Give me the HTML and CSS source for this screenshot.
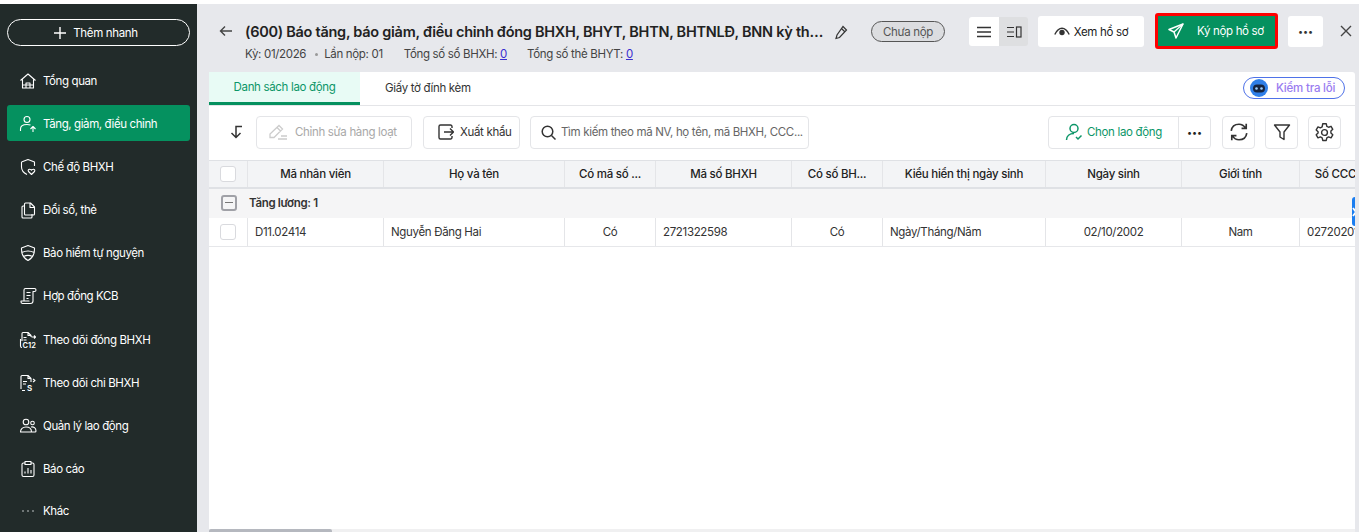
FILE: index.html
```html
<!DOCTYPE html>
<html lang="vi">
<head>
<meta charset="utf-8">
<title>Báo tăng, báo giảm</title>
<link rel="stylesheet" href="styles.css">
</head>
<body>
<div class="app">
  <aside class="sidebar">
    <button class="quick"><svg width="14" height="14" viewBox="0 0 14 14"><path d="M7 1v12M1 7h12" stroke="#fff" stroke-width="1.4" fill="none"/></svg>Thêm nhanh</button>
    <nav class="menu">
      <a class="item"><svg class="ic" viewBox="0 0 18 18"><path d="M1.5 8.5 9 2l7.5 6.5M3.5 7.5V16h11V7.5M7 16v-5h4v5M3.5 13h11"/></svg>Tổng quan</a>
      <a class="item active"><svg class="ic" viewBox="0 0 18 18"><circle cx="8" cy="4.500" r="3"/><path d="M1.500 16v-2c0-3 2.500-4.500 6.500-4.500 1.500 0 2.500.2 3.500.6M14 17v-5.500M11.500 14 14 11.500l2.500 2.500"/></svg>Tăng, giảm, điều chỉnh</a>
      <a class="item"><svg class="ic" viewBox="0 0 18 18"><path d="M9 1.500 15.500 4v4M2.500 4 9 1.500M2.500 4v5c0 3.500 2.500 6 5.500 7.500"/><path d="M12.500 16.500 9.500 13.500c-.8-1 0-2.500 1.500-2.300.7 0 1.200.5 1.500 1 .3-.5.8-1 1.500-1 1.500-.2 2.300 1.300 1.500 2.300z"/></svg>Chế độ BHXH</a>
      <a class="item"><svg class="ic" viewBox="0 0 18 18"><path d="M6.500 2h5l4 4v7a1 1 0 0 1-1 1h-8a1 1 0 0 1-1-1V3a1 1 0 0 1 1-1zM11 2v4.500h4.500M5.500 5H4a1 1 0 0 0-1 1v10a1 1 0 0 0 1 1h8a1 1 0 0 0 1-1v-3"/></svg>Đổi sổ, thẻ</a>
      <a class="item"><svg class="ic" viewBox="0 0 18 18"><path d="M9 1.500 15.500 4c.3 6-1.500 10-6.500 12.500C4 14 2.200 10 2.500 4zM2.800 8.500C7 6.500 11 6.500 15.200 8.500M4.500 12.500c3-1.500 6-1.500 9 0"/></svg>Bảo hiểm tự nguyện</a>
      <a class="item"><svg class="ic" viewBox="0 0 18 18"><path d="M5 14V3a1.500 1.500 0 0 1 1.500-1.500h9a1.500 1.500 0 0 1 0 3H14V14a2.500 2.500 0 0 1-2.500 2.500h-8A1.800 1.800 0 0 1 2 14.500V14h8v.5M7.500 5.500h4M7.500 8.500h4M7.500 11.500h2"/></svg>Hợp đồng KCB</a>
      <a class="item step"><svg class="ic" viewBox="0 0 18 18"><path d="M3 10V2.500A1 1 0 0 1 4 1.500h5l3 3v1.500M9 1.500v3h3M4.500 6.500h3M4.500 9h3M1.500 8v7c0 1 .5 1.500 1.500 1.500M12.500 6h4M15 4.500 16.500 6 15 7.500"/><text x="3.500" y="17" class="ictext">C12</text></svg>Theo dõi đóng BHXH</a>
      <a class="item"><svg class="ic" viewBox="0 0 18 18"><path d="M3 16.500h3M2 15V2.500a1 1 0 0 1 1-1h6l3 3V8M9 1.500v3h3M4 7.500h4M4 10h3M14 5l2 1.500L14 8"/><text x="8" y="17" class="ictext big">S</text></svg>Theo dõi chi BHXH</a>
      <a class="item"><svg class="ic" viewBox="0 0 18 18"><circle cx="7" cy="5" r="2.800"/><circle cx="13.500" cy="6" r="1.800"/><path d="M1.500 15c0-3 2.200-5 5.500-5s5.500 2 5.500 5zM12 10c2.800-.5 5 1 5 4 0 .5-.4 1-1 1h-3.500"/></svg>Quản lý lao động</a>
      <a class="item"><svg class="ic" viewBox="0 0 18 18"><path d="M6 3H4.500A1.500 1.500 0 0 0 3 4.500V15a1.500 1.500 0 0 0 1.500 1.500h9A1.500 1.500 0 0 0 15 15V4.500A1.500 1.500 0 0 0 13.500 3H12M6 1.500h6V4.500H6zM6 13.500v-2M9 13.500V8M12 13.500v-3.500"/></svg>Báo cáo</a>
      <a class="item more-item"><svg class="ic dots" viewBox="0 0 18 18"><circle cx="4" cy="9" r="1"/><circle cx="9" cy="9" r="1"/><circle cx="14" cy="9" r="1"/></svg>Khác</a>
    </nav>
  </aside>

  <main class="main">
    <header class="topbar">
      <svg class="back" width="14" height="12" viewBox="0 0 14 12"><path d="M13 6H1.500M6 1.500 1.500 6 6 10.500" stroke="#444" stroke-width="1.400" fill="none"/></svg>
      <div class="titles">
        <div class="title-row">
          <h1 class="title">(600) Báo tăng, báo giảm, điều chỉnh đóng BHXH, BHYT, BHTN, BHTNLĐ, BNN kỳ thu tiền</h1>
          <svg class="pencil" width="16" height="16" viewBox="0 0 16 16"><path d="M10 2.500 13.500 6l-7 7.500-3.500 1 1-3.500zM8.500 4.500l3.500 3.500" stroke="#333" stroke-width="1.200" fill="none"/></svg>
        </div>
        <div class="meta">
          <span class="ky">Kỳ: 01/2026</span><span class="dot"></span><span class="lan">Lần nộp: 01</span>
          <span class="tot1">Tổng số sổ BHXH: <a class="lnk">0</a></span>
          <span>Tổng số thẻ BHYT: <a class="lnk">0</a></span>
        </div>
      </div>
      <span class="status">Chưa nộp</span>
      <div class="toggle">
        <span class="tg on"><svg width="16" height="12" viewBox="0 0 16 12"><path d="M1 1.500h14M1 6h14M1 10.500h14" stroke="#333" stroke-width="1.300"/></svg></span>
        <span class="tg"><svg width="16" height="12" viewBox="0 0 16 12"><path d="M1 1.500h7M1 6h7M1 10.500h7" stroke="#333" stroke-width="1.200"/><rect x="10.500" y="1" width="4.500" height="10" fill="none" stroke="#333" stroke-width="1.200"/></svg></span>
      </div>
      <button class="view"><svg width="16" height="10" viewBox="0 0 16 10"><path d="M.8 7.500C3 3 5.500 1.300 8 1.300S13 3 15.200 7.500" fill="none" stroke="#333" stroke-width="1.400"/><circle cx="8" cy="5.500" r="2.700" fill="#333"/></svg>Xem hồ sơ</button>
      <button class="sign"><svg width="16" height="16" viewBox="0 0 16 16"><path d="M15 1 1 6.500l5 2.500 2 6z" fill="none" stroke="#fff" stroke-width="1.500" stroke-linejoin="round"/><path d="M15 1 6 9" stroke="#fff" stroke-width="1.300"/></svg><span>Ký nộp hồ sơ</span></button>
      <button class="kebab">•••</button>
      <svg class="close" width="12" height="12" viewBox="0 0 12 12"><path d="M1 1l10 10M11 1 1 11" stroke="#444" stroke-width="1.400"/></svg>
    </header>

    <section class="card">
      <div class="tabs">
        <span class="tab current">Danh sách lao động</span>
        <span class="tab second">Giấy tờ đính kèm</span>
        <span class="check"><svg width="20" height="20" viewBox="0 0 20 20"><circle cx="10" cy="10" r="9" fill="#2f7fe8"/><rect x="4" y="6.500" width="12" height="8" rx="4" fill="#16243f"/><circle cx="7.500" cy="10.500" r="1.300" fill="#9fd0ff"/><circle cx="12.500" cy="10.500" r="1.300" fill="#9fd0ff"/></svg><span class="check-t">Kiểm tra lỗi</span></span>
      </div>

      <div class="toolbar">
        <svg class="sortic" width="14" height="14" viewBox="0 0 14 14"><path d="M13 1.500H7v11M2.500 8 7 12.500 11.500 8" stroke="#333" stroke-width="1.500" fill="none"/></svg>
        <button class="tbtn disabled"><svg width="20" height="17" viewBox="0 0 20 17"><path d="M11 1.500 14.500 5 6 13.500H2V10zM9 3.500 12.500 7M10 15h9M13 12h6" stroke="#ccc" stroke-width="1.300" fill="none"/></svg>Chỉnh sửa hàng loạt</button>
        <button class="tbtn export"><svg width="16" height="16" viewBox="0 0 16 16"><path d="M14 4V2.500A1.500 1.500 0 0 0 12.500 1h-10A1.500 1.500 0 0 0 1 2.500v11A1.500 1.500 0 0 0 2.500 15h10a1.500 1.500 0 0 0 1.500-1.500V12M6 8h9.500M12 4.500 15.500 8 12 11.500" stroke="#333" stroke-width="1.400" fill="none"/></svg>Xuất khẩu</button>
        <div class="search"><svg width="15" height="15" viewBox="0 0 15 15"><circle cx="6.500" cy="6.500" r="5.300" stroke="#333" stroke-width="1.500" fill="none"/><path d="m10.500 10.500 4 4" stroke="#333" stroke-width="1.500"/></svg><span>Tìm kiếm theo mã NV, họ tên, mã BHXH, CCC...</span></div>
        <div class="spacer"></div>
        <div class="pick">
          <span class="pick-main"><svg width="18" height="18" viewBox="0 0 18 18"><circle cx="9" cy="5.500" r="4" stroke="#0c9668" stroke-width="1.500" fill="none"/><path d="M1.500 17c0-4 3-6.500 7.500-6.500M11 14l2 2 3.500-3.500" stroke="#0c9668" stroke-width="1.500" fill="none"/></svg>Chọn lao động</span>
          <span class="pick-more">•••</span>
        </div>
        <button class="sq"><svg width="20" height="20" viewBox="0 0 18 18"><path d="M2 8c.5-3.500 3-6 7-6 2.500 0 4.500 1.200 6 3.500M15.500 1.500v4.200h-4.200M16 10c-.5 3.500-3 6-7 6-2.500 0-4.500-1.200-6-3.500M2.500 16.500v-4.200h4.200" stroke="#333" stroke-width="1.500" fill="none"/></svg></button>
        <button class="sq"><svg width="18" height="18" viewBox="0 0 18 18"><path d="M1.500 2h15l-5.500 7v7.500L7 14V9z" stroke="#333" stroke-width="1.400" fill="none" stroke-linejoin="round"/></svg></button>
        <button class="sq"><svg width="21" height="21" viewBox="0 0 18 18"><path d="M7.500 1.500h3l.5 2.200 1.500.8 2.100-.8 1.500 2.600-1.600 1.500v1.700l1.600 1.500-1.500 2.600-2.100-.8-1.500.8-.5 2.200h-3l-.5-2.200-1.500-.8-2.100.8-1.500-2.600 1.600-1.500V8.300L1.900 6.800l1.500-2.600 2.100.8L7 4.200z" stroke="#333" stroke-width="1.200" fill="none" stroke-linejoin="round"/><circle cx="9" cy="9" r="2.500" stroke="#333" stroke-width="1.200" fill="none"/></svg></button>
      </div>

      <div class="table">
        <div class="row head">
          <div class="cell cb"><span class="box"></span></div>
          <div class="cell">Mã nhân viên</div>
          <div class="cell">Họ và tên</div>
          <div class="cell">Có mã số ...</div>
          <div class="cell">Mã số BHXH</div>
          <div class="cell">Có số BH...</div>
          <div class="cell">Kiểu hiển thị ngày sinh</div>
          <div class="cell">Ngày sinh</div>
          <div class="cell">Giới tính</div>
          <div class="cell">Số CCCD</div>
        </div>
        <div class="group"><span class="minus"></span><b>Tăng lương: 1</b></div>
        <div class="row body">
          <div class="cell cb"><span class="box"></span></div>
          <div class="cell l">D11.02414</div>
          <div class="cell l">Nguyễn Đăng Hai</div>
          <div class="cell">Có</div>
          <div class="cell l">2721322598</div>
          <div class="cell">Có</div>
          <div class="cell l">Ngày/Tháng/Năm</div>
          <div class="cell">02/10/2002</div>
          <div class="cell">Nam</div>
          <div class="cell l">027202012345</div>
        </div>
      </div>
      <div class="tblspace"></div>
      <div class="hscroll"><span class="thumb"></span></div>
      <span class="edge"><svg width="8" height="10" viewBox="0 0 8 10"><path d="M1 1l6 8M7 1 1 9" stroke="#fff" stroke-width="1.800"/></svg></span>
    </section>
  </main>
</div>
</body>
</html>
```
FILE: styles.css
```css
* { box-sizing: border-box; }
html, body { margin: 0; padding: 0; height: 100%; overflow: hidden; }
body { font-family: Inter, "Noto Sans", sans-serif; font-size: 11.5px; letter-spacing: -0.33px; color: #222; background: #fff; padding-top: 4px; }
button { font: inherit; letter-spacing: inherit; color: inherit; cursor: pointer; }
svg { display: block; flex: none; }
.app { display: flex; height: 528px; }

.sidebar { width: 197px; flex: none; background: #222b2a; color: #fff; padding: 15px 7px 0; }
.quick { width: 183px; height: 27px; border: 1px solid #fff; border-radius: 14px; background: transparent; color: #fff; display: flex; align-items: center; justify-content: center; gap: 6px; padding: 0 6px 0 0; }
.menu { display: flex; flex-direction: column; margin-top: 16px; gap: 7px; }
.item { height: 36px; display: flex; align-items: center; gap: 6px; padding: 2px 0 0 12px; border-radius: 3px; color: #fff; white-space: nowrap; letter-spacing: -0.4px; }
.item.active { background: #05915f; }
.item.step { margin-top: 1px; }
.ic { width: 18px; height: 18px; fill: none; stroke: #fff; stroke-width: 1.100; stroke-linejoin: round; }
.ic.dots { fill: #8a9090; stroke: none; }
.ictext { font-size: 7.500px; fill: #fff; stroke: none; font-weight: 600; letter-spacing: 0; }
.ictext.big { font-size: 8px; }
.more-item { margin-top: -1px; }

.main { flex: 1; min-width: 0; background: #e7e8ec; padding: 0 4px 0 12px; display: flex; flex-direction: column; }
.topbar { height: 68px; flex: none; display: flex; align-items: flex-start; position: relative; }
.back { margin: 21px 0 0 10px; }
.titles { width: 604px; flex: none; margin-left: 12px; padding-top: 18px; }
.title-row { display: flex; align-items: center; gap: 7px; }
.title { margin: 0; width: 581px; flex: none; font-size: 14.500px; letter-spacing: -0.27px; line-height: 20px; font-weight: 600; color: #222; white-space: nowrap; overflow: hidden; text-overflow: ellipsis; }
.meta { display: flex; align-items: center; margin-top: 5px; color: #444; letter-spacing: -0.33px; white-space: nowrap; line-height: 15px; }
.dot { width: 3px; height: 3px; border-radius: 50%; background: #999; margin: 0 6px 0 9px; flex: none; }
.tot1 { margin: 0 20px 0 21px; }
.lnk { color: #3a2fd0; text-decoration: underline; }
.status { margin: 17px 0 0 22px; width: 74px; height: 21px; border: 1px solid #555; border-radius: 11px; background: #dcdde0; color: #555; display: flex; align-items: center; justify-content: center; flex: none; }
.toggle { margin: 13px 0 0 24px; display: flex; flex: none; }
.tg { width: 29px; height: 29px; display: flex; align-items: center; justify-content: center; background: #dedfe1; border-radius: 0 3px 3px 0; }
.tg.on { width: 30px; background: #fff; border-radius: 3px 0 0 3px; }
.view { margin: 12px 0 0 10px; width: 106px; height: 31px; flex: none; background: #fff; border: 0; border-radius: 3px; display: flex; align-items: center; justify-content: center; gap: 4px; padding: 0; }
.sign { margin: 9px 0 0 11px; width: 123px; height: 36px; flex: none; background: #05915f; border: 3px solid #f00; border-radius: 3px; color: #fff; display: flex; align-items: center; padding: 0 0 0 10px; white-space: nowrap; }
.sign span { margin-left: 13px; }
.kebab { margin: 12px 0 0 10px; width: 35px; height: 31px; flex: none; background: #fff; border: 0; border-radius: 3px; font-size: 9px; letter-spacing: 0; color: #333; padding: 0; }
.close { margin: 21px 0 0 17px; }

.card { position: relative; flex: 1; min-height: 0; background: #fff; border-radius: 3px 3px 0 0; display: flex; flex-direction: column; }
.tabs { height: 34px; flex: none; display: flex; align-items: stretch; border-bottom: 1px solid #e4e5e8; }
.tab { display: flex; align-items: center; padding-bottom: 2px; color: #333; white-space: nowrap; }
.tab.current { width: 151px; justify-content: center; background: #e8fbf5; color: #0c9668; border-bottom: 3px solid #05915f; height: 33px; padding-bottom: 0; }
.tab.second { margin-left: 25px; }
.check { margin: 5px 10px 0 auto; width: 102px; height: 22px; border: 1px solid #4f72e8; border-radius: 11px; display: flex; align-items: center; gap: 7px; padding-left: 5px; }
.check-t { font-weight: 500; color: #9a7cf0; white-space: nowrap; letter-spacing: -0.2px; }

.toolbar { height: 54px; flex: none; display: flex; align-items: center; padding: 0 14px 2px 20px; }
.sortic { margin-right: 13px; }
.tbtn { height: 33px; background: #fff; border: 1px solid #e4e5e8; border-radius: 4px; display: flex; align-items: center; padding: 0; white-space: nowrap; }
.tbtn.disabled { width: 156px; color: #a8a8a8; gap: 7px; padding-left: 11px; }
.tbtn.export { width: 97px; margin-left: 11px; color: #333; gap: 6px; padding-left: 14px; }
.search { margin-left: 10px; width: 279px; height: 33px; border: 1px solid #e4e5e8; border-radius: 4px; display: flex; align-items: center; gap: 5px; padding-left: 10px; color: #666; white-space: nowrap; }
.spacer { flex: 1; }
.pick { display: flex; height: 33px; border: 1px solid #e4e5e8; border-radius: 4px; flex: none; }
.pick-main { width: 130px; display: flex; align-items: center; justify-content: center; gap: 4px; color: #0c9668; border-right: 1px solid #e4e5e8; white-space: nowrap; }
.pick-more { width: 31px; display: flex; align-items: center; justify-content: center; font-size: 9px; letter-spacing: 0; color: #222; }
.sq { width: 33px; height: 33px; flex: none; margin-left: 10px; background: #fff; border: 1px solid #e4e5e8; border-radius: 4px; display: flex; align-items: center; justify-content: center; padding: 0; }
.pick + .sq { margin-left: 11px; }

.table { overflow: hidden; flex: none; }
.row { display: grid; grid-template-columns: 39px 136px 181px 91px 136px 91px 163px 136px 118px 80px; height: 29px; }
.head { background: #f3f4f6; border-top: 1px solid #dfe1e5; border-bottom: 2px solid #dfe1e5; font-weight: 500; letter-spacing: -0.25px; }
.cell { display: flex; align-items: center; justify-content: center; border-right: 1px solid #e4e5e8; white-space: nowrap; overflow: hidden; color: #333; padding-bottom: 1px; }
.cell.cb { padding-bottom: 0; }
.head .cell { color: #222; }
.body { border-bottom: 1px solid #e6e7ea; }
.cell.l { justify-content: flex-start; padding-left: 7px; }
.box { width: 16px; height: 16px; border: 1px solid #d9dade; border-radius: 3px; background: #fff; display: block; }
.group { height: 29px; background: #f5f5f6; display: flex; align-items: center; gap: 12px; padding: 0 0 1px 12px; color: #333; }
.group b { font-weight: 600; }
.minus { width: 16px; height: 16px; border: 2px solid #a0a1a7; border-radius: 3px; position: relative; flex: none; }
.minus::after { content: ""; position: absolute; left: 2px; right: 2px; top: 5px; height: 1px; background: #777; }
.tblspace { flex: 1; }
.hscroll { height: 3px; background: #f0f0f1; flex: none; }
.thumb { display: block; width: 123px; height: 3px; background: #b5b8bf; border-radius: 2px 2px 0 0; }
.edge { position: absolute; right: 0; top: 125px; width: 3px; height: 29px; background: #1a7df0; border-radius: 3px 0 0 3px; overflow: hidden; display: flex; align-items: center; }
```
